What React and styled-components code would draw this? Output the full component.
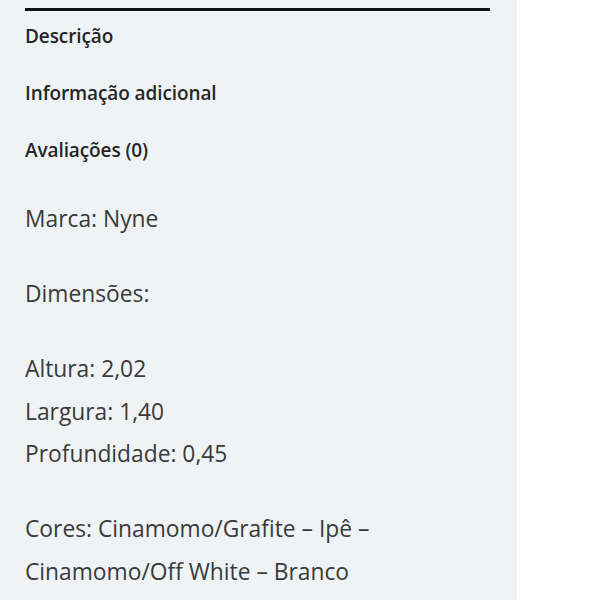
import React from 'react';
import styled, { createGlobalStyle } from 'styled-components';

const GlobalStyle = createGlobalStyle`
    html, body { margin : 0; padding : 0; background : #ffffff; }
    body { font-family : "Open Sans", "Noto Sans", sans-serif; }
`

const tabs = ['Descrição', 'Informação adicional', 'Avaliações (0)'];

const App = () => {
    return (
        <>
            <GlobalStyle />
            <Page>
                <Panel>
                    {/* 탭 목록 */}
                    <TabBar>
                        {tabs.map((t) => (
                            <TabItem key={t}>{t}</TabItem>
                        ))}
                    </TabBar>

                    {/* 상품 설명 */}
                    <Content>
                        <Para>Marca: Nyne</Para>
                        <Para>Dimensões:</Para>
                        <Para>
                            Altura: 2,02<br />
                            Largura: 1,40<br />
                            Profundidade: 0,45
                        </Para>
                        <Para>
                            Cores: Cinamomo/Grafite – Ipê –<br />
                            Cinamomo/Off White – Branco
                        </Para>
                    </Content>
                </Panel>
            </Page>
        </>
    );
};

const Page = styled.div`
    display : flex;
    width : 600px;
    height : 600px;
    overflow : hidden;
    background : #ffffff;
`

const Panel = styled.div`
    display : flex;
    flex-direction : column;
    width : 517px;
    height : 100%;
    padding : 8px 27px 0px 25px;
    box-sizing : border-box;
    background : #eff3f6;
`

const TabBar = styled.div`
    display : flex;
    flex-direction : column;
    border-top : 3px solid #111111;
    padding : 13px 0px 12px 0px;
    gap : 33px;
`

const TabItem = styled.div`
    font-size : 19px;
    font-weight : 600;
    line-height : 24px;
    letter-spacing : -0.1px;
    color : #262626;
`

const Content = styled.div`
    display : flex;
    flex-direction : column;
    padding-top : 24px;
    gap : 32.5px;
`

const Para = styled.p`
    margin : 0;
    font-size : 22.8px;
    line-height : 42.5px;
    color : #3a3a3a;
`

export default App;
